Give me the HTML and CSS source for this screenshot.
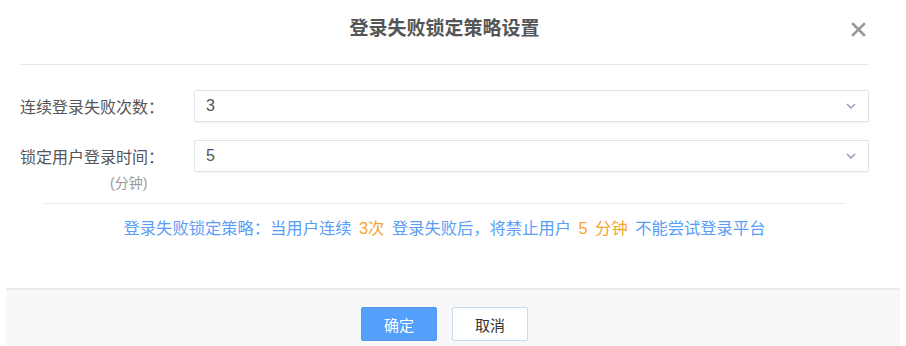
FILE: index.html
```html
<!DOCTYPE html>
<html lang="zh-CN">
<head>
<meta charset="utf-8">
<title>登录失败锁定策略设置</title>
<link rel="stylesheet" href="styles.css">
</head>
<body>
<div class="dialog">
  <div class="header">
    <span></span>
    <h1 class="title">登录失败锁定策略设置</h1>
    <button class="close" aria-label="关闭">
      <svg width="15" height="15" viewBox="0 0 15 15"><path d="M2 2 L13 13 M13 2 L2 13" stroke="#999" stroke-width="2.6" stroke-linecap="square" fill="none"/></svg>
    </button>
  </div>
  <div class="body">
    <div class="row">
      <label class="label">连续登录失败次数：</label>
      <div class="select">
        <span class="value">3</span>
        <svg class="chev" width="10" height="6" viewBox="0 0 10 6"><path d="M1 1 L5 5 L9 1" stroke="#8d9bb0" stroke-width="1.4" fill="none"/></svg>
      </div>
    </div>
    <div class="row row2">
      <label class="label">锁定用户登录时间：</label>
      <div class="select">
        <span class="value">5</span>
        <svg class="chev" width="10" height="6" viewBox="0 0 10 6"><path d="M1 1 L5 5 L9 1" stroke="#8d9bb0" stroke-width="1.4" fill="none"/></svg>
      </div>
    </div>
    <div class="unit">(分钟)</div>
    <div class="divider"></div>
    <p class="info">登录失败锁定策略：当用户连续 <span class="hl">3次</span> 登录失败后，将禁止用户 <span class="hl">5 分钟</span> 不能尝试登录平台</p>
  </div>
  <div class="footer">
    <button class="btn primary">确定</button>
    <button class="btn">取消</button>
  </div>
</div>
</body>
</html>
```
FILE: styles.css
```css
* { box-sizing: border-box; }
body {
  margin: 0;
  background: #fff;
  font-family: "Liberation Sans", "Noto Sans CJK SC", sans-serif;
  color: #555;
}
.dialog {
  padding: 0 6px;
}
.header {
  margin: 0 31px 0 14px;
  height: 65px;
  padding-top: 17px;
  border-bottom: 1px solid #e6e6e6;
  display: grid;
  grid-template-columns: 1fr auto 1fr;
  align-items: start;
}
.title {
  margin: 0;
  font-size: 19px;
  line-height: 24px;
  font-weight: bold;
  color: #555;
}
.close {
  justify-self: end;
  margin: 5px 3px 0 0;
  padding: 0;
  border: 0;
  background: none;
  width: 15px;
  height: 15px;
  display: block;
}
.close svg { display: block; }
.body {
  margin: 0 31px 0 14px;
}
.row {
  display: flex;
  align-items: center;
  margin-top: 25px;
}
.row2 { margin-top: 18px; }
.label {
  width: 174px;
  flex: none;
  font-size: 16px;
  color: #555;
}
.select {
  flex: 1;
  height: 32px;
  border: 1px solid #e3e3e3;
  border-radius: 2px;
  box-shadow: 0 1px 2px rgba(0,0,0,0.05);
  display: flex;
  align-items: center;
  justify-content: space-between;
  padding: 0 12px 0 11px;
}
.value {
  font-size: 16px;
  color: #555;
}
.chev { display: block; }
.unit {
  margin: 2px 0 0 90px;
  font-size: 14px;
  line-height: 18px;
  color: #999;
}
.divider {
  margin: 11px 24px 0;
  border-top: 1px dotted #d8d8d8;
}
.info {
  margin: 13px 0 0;
  text-align: center;
  font-size: 16.3px;
  word-spacing: 3px;
  line-height: 22px;
  color: #5a9df7;
}
.hl { color: #f5a431; }
.footer {
  margin-top: 49px;
  border-top: 2px solid #ebebeb;
  background: #f8f8f8;
  padding: 17px 17px 20px 0;
  display: flex;
  justify-content: center;
  gap: 15px;
}
.btn {
  width: 76px;
  height: 34px;
  border: 1px solid #c9dcf2;
  border-radius: 2px;
  background: #fff;
  color: #333;
  font-family: "Noto Sans CJK SC", sans-serif;
  font-size: 15px;
  padding: 0;
}
.btn.primary {
  background: #55a0fd;
  border-color: #4e98f2;
  color: #fff;
}
```
